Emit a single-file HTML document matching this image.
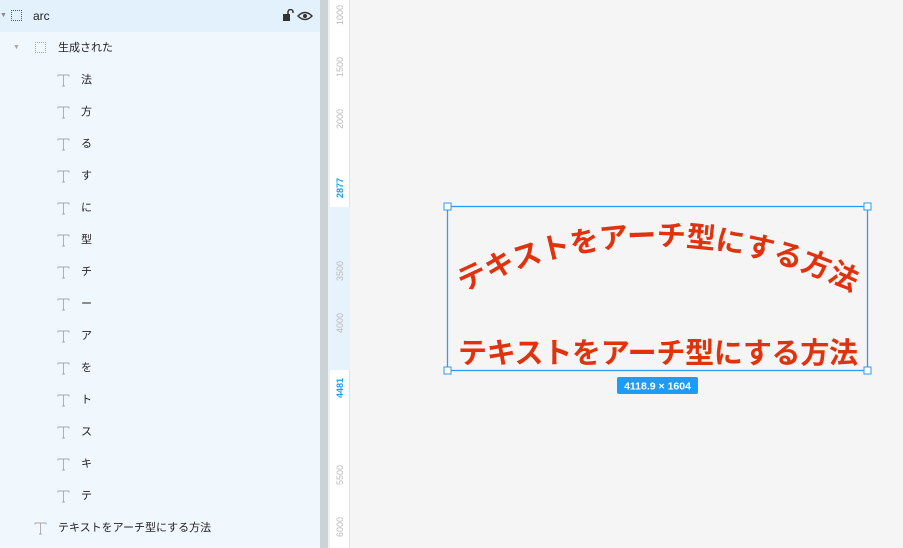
<!DOCTYPE html>
<html><head><meta charset="utf-8">
<style>
*{margin:0;padding:0;box-sizing:border-box}
body{width:903px;height:548px;overflow:hidden;background:#f5f5f5;font-family:"Liberation Sans","Noto Sans CJK JP",sans-serif;position:relative}
#side{position:absolute;left:0;top:0;width:320px;height:548px;background:#f0f8fe}
.row{position:absolute;left:0;width:320px;height:32px;font-size:11px;color:#222;line-height:32px}
.row span{position:absolute}
.row svg.t{position:absolute;top:10px}
.dash{position:absolute;width:11px;height:11px;border:1px dotted #555;top:10px}
#scroll{position:absolute;left:320px;top:0;width:8px;height:548px;background:#ccd3d6}
#scroll2{position:absolute;left:328px;top:0;width:2px;height:548px;background:#eef2f5}
#ruler{position:absolute;left:330px;top:0;width:20px;height:548px;background:#fff;border-right:1px solid #e2e2e2}
.rl{position:absolute;left:0;width:20px;font-size:9px;color:#bbb;transform:rotate(-90deg);text-align:center}
</style></head><body>
<svg width="0" height="0" style="position:absolute"><defs><g id="T"><path d="M1 2.5 V1 H12 V2.5 M6.5 1 V12 M5 12 H8" stroke="#a8a8a8" stroke-width="0.9" fill="none"/></g></defs></svg>
<div id="side">
<div class="row" style="top:0;background:#e3f1fc"><span style="left:0;font-size:7px;color:#888">▼</span><div class="dash" style="left:11px"></div><span style="left:33px;font-size:12px">arc</span>
<svg style="position:absolute;left:283px;top:9px" width="32" height="14"><rect x="0" y="5" width="7" height="7" fill="#333"/><path d="M5 5 V3 a2.5 2.5 0 0 1 5 0 V4" stroke="#333" stroke-width="1.5" fill="none"/><path d="M15 7 Q22 0 29 7 Q22 14 15 7Z" stroke="#333" stroke-width="1.4" fill="none"/><circle cx="22" cy="7" r="2" fill="#333"/></svg></div>
<div class="row" style="top:32px"><span style="left:13px;font-size:7px;color:#aaa">▼</span><div class="dash" style="left:35px;border-color:#aaa"></div><span style="left:58px">生成された</span></div>
<div class="row" style="top:64px"><svg class="t" style="left:57px" width="13" height="13"><use href="#T"/></svg><span style="left:81px">法</span></div>
<div class="row" style="top:96px"><svg class="t" style="left:57px" width="13" height="13"><use href="#T"/></svg><span style="left:81px">方</span></div>
<div class="row" style="top:128px"><svg class="t" style="left:57px" width="13" height="13"><use href="#T"/></svg><span style="left:81px">る</span></div>
<div class="row" style="top:160px"><svg class="t" style="left:57px" width="13" height="13"><use href="#T"/></svg><span style="left:81px">す</span></div>
<div class="row" style="top:192px"><svg class="t" style="left:57px" width="13" height="13"><use href="#T"/></svg><span style="left:81px">に</span></div>
<div class="row" style="top:224px"><svg class="t" style="left:57px" width="13" height="13"><use href="#T"/></svg><span style="left:81px">型</span></div>
<div class="row" style="top:256px"><svg class="t" style="left:57px" width="13" height="13"><use href="#T"/></svg><span style="left:81px">チ</span></div>
<div class="row" style="top:288px"><svg class="t" style="left:57px" width="13" height="13"><use href="#T"/></svg><span style="left:81px">ー</span></div>
<div class="row" style="top:320px"><svg class="t" style="left:57px" width="13" height="13"><use href="#T"/></svg><span style="left:81px">ア</span></div>
<div class="row" style="top:352px"><svg class="t" style="left:57px" width="13" height="13"><use href="#T"/></svg><span style="left:81px">を</span></div>
<div class="row" style="top:384px"><svg class="t" style="left:57px" width="13" height="13"><use href="#T"/></svg><span style="left:81px">ト</span></div>
<div class="row" style="top:416px"><svg class="t" style="left:57px" width="13" height="13"><use href="#T"/></svg><span style="left:81px">ス</span></div>
<div class="row" style="top:448px"><svg class="t" style="left:57px" width="13" height="13"><use href="#T"/></svg><span style="left:81px">キ</span></div>
<div class="row" style="top:480px"><svg class="t" style="left:57px" width="13" height="13"><use href="#T"/></svg><span style="left:81px">テ</span></div>
<div class="row" style="top:512px"><svg class="t" style="left:34px" width="13" height="13"><use href="#T"/></svg><span style="left:58px">テキストをアーチ型にする方法</span></div>
</div>
<div id="scroll"></div><div id="scroll2"></div>
<div id="ruler">
<div style="position:absolute;left:0;top:207px;width:20px;height:163px;background:#e6f3fd"></div>
<div class="rl" style="top:10px">1000</div>
<div class="rl" style="top:62px">1500</div>
<div class="rl" style="top:114px">2000</div>
<div class="rl" style="top:183px;color:#1a9cf0;font-weight:bold">2877</div>
<div class="rl" style="top:266px">3500</div>
<div class="rl" style="top:318px">4000</div>
<div class="rl" style="top:383px;color:#1a9cf0;font-weight:bold">4481</div>
<div class="rl" style="top:470px">5500</div>
<div class="rl" style="top:522px">6000</div>
</div>
<svg style="position:absolute;left:0;top:0" width="903" height="548">
<defs><path id="arc" d="M445 302 A430 430 0 0 1 871 302"/></defs>
<text font-family="'Noto Sans CJK JP',sans-serif" font-weight="bold" font-size="29" fill="#e0320c" text-anchor="middle"><textPath href="#arc" startOffset="50%">テキストをアーチ型にする方法</textPath></text>
<text x="658" y="363" font-family="'Noto Sans CJK JP',sans-serif" font-weight="bold" font-size="29" fill="#e0320c" text-anchor="middle" textLength="400">テキストをアーチ型にする方法</text>
<rect x="447.5" y="206.5" width="420" height="164" fill="none" stroke="#2d9bf0" stroke-width="1.3"/>
<g fill="#fff" stroke="#2d9bf0"><rect x="444" y="203" width="7" height="7"/><rect x="864" y="203" width="7" height="7"/><rect x="444" y="367" width="7" height="7"/><rect x="864" y="367" width="7" height="7"/></g>
<rect x="617" y="377" width="81" height="17" rx="2" fill="#1e9cf5"/>
<text x="657.5" y="389.5" font-family="'Liberation Sans',sans-serif" font-size="10.5" fill="#fff" text-anchor="middle" font-weight="bold">4118.9 × 1604</text>
</svg>
</body></html>
